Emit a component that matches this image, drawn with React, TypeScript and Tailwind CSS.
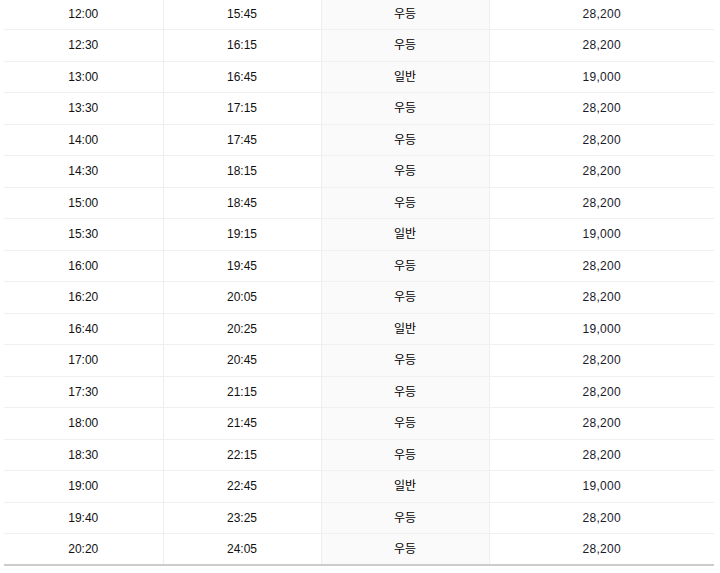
const rows: [string, string, string, string][] = [
  ['12:00', '15:45', '우등', '28,200'],
  ['12:30', '16:15', '우등', '28,200'],
  ['13:00', '16:45', '일반', '19,000'],
  ['13:30', '17:15', '우등', '28,200'],
  ['14:00', '17:45', '우등', '28,200'],
  ['14:30', '18:15', '우등', '28,200'],
  ['15:00', '18:45', '우등', '28,200'],
  ['15:30', '19:15', '일반', '19,000'],
  ['16:00', '19:45', '우등', '28,200'],
  ['16:20', '20:05', '우등', '28,200'],
  ['16:40', '20:25', '일반', '19,000'],
  ['17:00', '20:45', '우등', '28,200'],
  ['17:30', '21:15', '우등', '28,200'],
  ['18:00', '21:45', '우등', '28,200'],
  ['18:30', '22:15', '우등', '28,200'],
  ['19:00', '22:45', '일반', '19,000'],
  ['19:40', '23:25', '우등', '28,200'],
  ['20:20', '24:05', '우등', '28,200'],
];

export default function App() {
  return (
    <div className="w-[720px] h-[573px] overflow-hidden bg-white">
      <table
        className="ml-[4px] -mt-[2px] w-[710px] border-collapse text-[12px] text-[#111] border-b-2 border-[#cccccc]"
        style={{ fontFamily: "'Liberation Sans', 'Noto Sans CJK KR', sans-serif" }}
      >
        <tbody>
          {rows.map(([dep, arr, grade, price]) => (
            <tr key={dep} className="h-[31.5px] border-b border-[#f0f0f0]">
              <td className="w-[159px] p-0 text-center border-r border-[#eeeeee]">{dep}</td>
              <td className="w-[158px] p-0 text-center border-r border-[#eeeeee]">{arr}</td>
              <td className="w-[168px] p-0 text-center bg-[#fafafa] border-r border-[#eeeeee] text-black">
                {grade}
              </td>
              <td className="p-0 text-center text-[#1a1a2a] tracking-[0.3px]">{price}</td>
            </tr>
          ))}
        </tbody>
      </table>
    </div>
  );
}
